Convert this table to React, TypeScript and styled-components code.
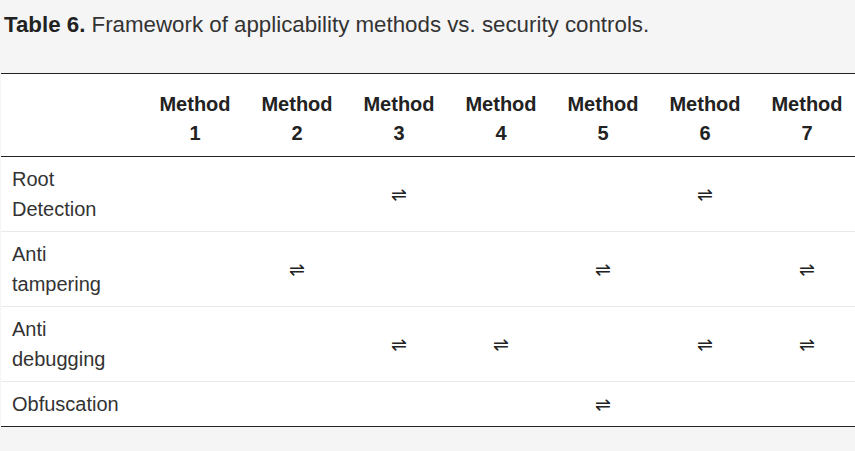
import React from "react";
import styled, { createGlobalStyle } from "styled-components";

const Global = createGlobalStyle`
  html, body { margin: 0; padding: 0; background: #f5f5f5; }
  body { font-family: "Liberation Sans", Arial, sans-serif; color: #333; overflow: hidden; }
`;

const Page = styled.div`
  width: 855px;
  height: 451px;
  padding: 10px 0 0 1px;
  box-sizing: border-box;
  overflow: hidden;
`;

const Caption = styled.div`
  font-size: 22.3px;
  line-height: 30px;
  color: #333;
  padding-left: 3px;
  margin-bottom: 33px;
  white-space: nowrap;
  b { color: #222; }
`;

const Table = styled.table`
  border-collapse: collapse;
  background: #fff;
  table-layout: fixed;
  width: 857px;
  border-top: 1px solid #222;
  border-bottom: 1px solid #222;
  font-size: 20px;
`;

const HeadCell = styled.th`
  font-weight: bold;
  color: #222;
  text-align: center;
  line-height: 29px;
  padding: 16px 4px 8px;
  border-bottom: 1px solid #222;
  vertical-align: middle;
`;

const Row = styled.tr<{ $last?: boolean }>`
  border-bottom: ${(p) => (p.$last ? "none" : "1px solid #e9e9e9")};
`;

const LabelCell = styled.td`
  text-align: left;
  line-height: 30px;
  padding: 7px 11px;
  color: #333;
  vertical-align: middle;
`;

const MarkCell = styled.td`
  text-align: center;
  vertical-align: middle;
  padding: 7px 4px;
  line-height: 30px;
  font-family: "DejaVu Sans", sans-serif;
  font-size: 19px;
  color: #222;
`;

const rows: { label: string[]; marks: number[] }[] = [
  { label: ["Root", "Detection"], marks: [3, 6] },
  { label: ["Anti", "tampering"], marks: [2, 5, 7] },
  { label: ["Anti", "debugging"], marks: [3, 4, 6, 7] },
  { label: ["Obfuscation"], marks: [5] },
];

export default function App() {
  return (
    <>
      <Global />
      <Page>
        <Caption>
          <b>Table 6.</b> Framework of applicability methods vs. security controls.
        </Caption>
        <Table>
          <colgroup>
            <col style={{ width: 143 }} />
            {[1, 2, 3, 4, 5, 6, 7].map((i) => (
              <col key={i} style={{ width: 102 }} />
            ))}
          </colgroup>
          <thead>
            <tr>
              <HeadCell />
              {[1, 2, 3, 4, 5, 6, 7].map((i) => (
                <HeadCell key={i}>
                  Method
                  <br />
                  {i}
                </HeadCell>
              ))}
            </tr>
          </thead>
          <tbody>
            {rows.map((r, ri) => (
              <Row key={ri} $last={ri === rows.length - 1}>
                <LabelCell>
                  {r.label.map((l, li) => (
                    <React.Fragment key={li}>
                      {li > 0 && <br />}
                      {l}
                    </React.Fragment>
                  ))}
                </LabelCell>
                {[1, 2, 3, 4, 5, 6, 7].map((i) => (
                  <MarkCell key={i}>{r.marks.includes(i) ? "⇌" : ""}</MarkCell>
                ))}
              </Row>
            ))}
          </tbody>
        </Table>
      </Page>
    </>
  );
}
